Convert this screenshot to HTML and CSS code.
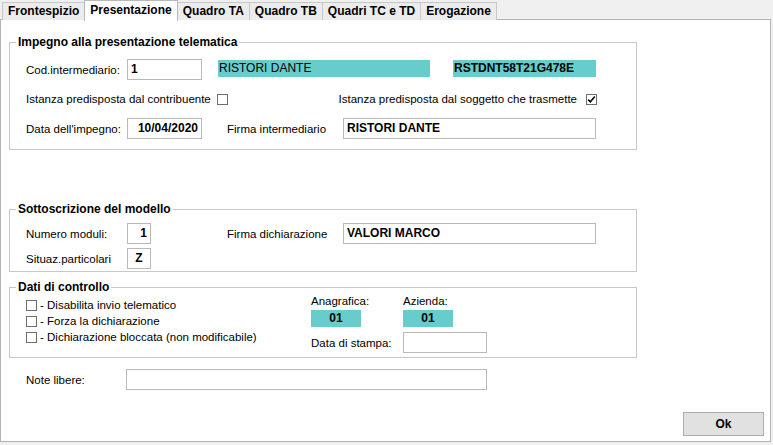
FILE: index.html
```html
<!DOCTYPE html>
<html lang="it">

<head>
    <meta charset="UTF-8">
    <meta name="viewport" content="width=device-width, initial-scale=1.0">
    <title>Presentazione</title>
    <link rel="stylesheet" href="styles.css">
</head>

<body>
    <div class="tabs">
        <div class="tab">Frontespizio</div>
        <div class="tab active">Presentazione</div>
        <div class="tab">Quadro TA</div>
        <div class="tab">Quadro TB</div>
        <div class="tab">Quadri TC e TD</div>
        <div class="tab">Erogazione</div>
    </div>

    <div class="panel">
        <fieldset class="group impegno">
            <legend>Impegno alla presentazione telematica</legend>

            <div class="row tall">
                <span class="lbl w101">Cod.intermediario:</span>
                <span class="field w75">1</span>
                <span class="cyan name">RISTORI DANTE</span>
                <span class="cyan cf">RSTDNT58T21G478E</span>
            </div>
            <div class="row short gap10">
                <span class="lbl w191">Istanza predisposta dal contribuente</span>
                <span class="check"></span>
                <span class="right-check">
                    <span class="lbl">Istanza predisposta dal soggetto che trasmette</span>
                    <span class="check">
                        <svg width="9" height="9" viewBox="0 0 9 9"><path d="M1.2 4.6 L3.4 6.8 L7.8 1.6" fill="none" stroke="#000" stroke-width="1.5"/></svg>
                    </span>
                </span>
            </div>
            <div class="row tall gap10">
                <span class="lbl w101">Data dell'impegno:</span>
                <span class="field w75 num">10/04/2020</span>
                <span class="lbl firma">Firma intermediario</span>
                <span class="field wide">RISTORI DANTE</span>
            </div>
        </fieldset>

        <fieldset class="group sottoscrizione">
            <legend>Sottoscrizione del modello</legend>

            <div class="row tall">
                <span class="lbl w101">Numero moduli:</span>
                <span class="field w24 num">1</span>
                <span class="lbl firma2">Firma dichiarazione</span>
                <span class="field wide">VALORI MARCO</span>
            </div>
            <div class="row tall gap4">
                <span class="lbl w101">Situaz.particolari</span>
                <span class="field w24 center">Z</span>
            </div>
        </fieldset>

        <fieldset class="group controllo">
            <legend>Dati di controllo</legend>

            <div class="ctrl-row">
                <div class="checks">
                    <div class="check-line"><span class="check"></span><span>- Disabilita invio telematico</span></div>
                    <div class="check-line"><span class="check"></span><span>- Forza la dichiarazione</span></div>
                    <div class="check-line"><span class="check"></span><span>- Dichiarazione bloccata (non modificabile)</span></div>
                </div>
                <div class="ctrl-grid">
                    <span class="top-lbl">Anagrafica:</span>
                    <span class="top-lbl">Azienda:</span>
                    <span class="cyan small">01</span>
                    <span class="cyan small">01</span>
                    <span class="lbl stampa-lbl">Data di stampa:</span>
                    <span class="field stampa"></span>
                </div>
            </div>
        </fieldset>

        <div class="row tall note">
            <span class="lbl w100">Note libere:</span>
            <span class="field note-field"></span>
        </div>

        <button class="ok" type="button">Ok</button>
    </div>
</body>

</html>
```

FILE: styles.css
```css
* {
    box-sizing: border-box;
}

body {
    margin: 0;
    background: #f0f0f0;
    font-family: "Liberation Sans", Arial, sans-serif;
    font-size: 11.5px;
    color: #000;
}

.tabs {
    display: flex;
    align-items: flex-end;
    height: 20px;
    padding-left: 2px;
}

.tab {
    height: 18px;
    line-height: 17px;
    padding: 0 5px;
    border: 1px solid #c8c8c8;
    border-bottom: none;
    margin-right: -1px;
    background: #ececec;
    font-weight: bold;
    font-size: 12px;
}

.tab.active {
    height: 21px;
    line-height: 18px;
    margin-bottom: -1px;
    background: #fff;
    border-color: #b9b9b9;
    position: relative;
    z-index: 1;
}

.panel {
    margin-top: -1px;
    width: 771px;
    height: 423px;
    border: 1px solid #b4b4b4;
    background: #fff;
    display: flex;
    flex-direction: column;
    padding-left: 8px;
}

.group {
    margin: 0;
    width: 628px;
    border: 1px solid #c8c8c8;
    padding: 10px 39px 10px 16px;
}

.group legend {
    padding: 0 2px;
    margin-left: -10px;
    font-weight: bold;
    font-size: 12px;
    line-height: 14px;
}

.impegno {
    margin-top: 15px;
}

.sottoscrizione {
    margin-top: 52px;
    padding-top: 7px;
    padding-bottom: 2px;
}

.controllo {
    margin-top: 8px;
    padding-top: 0;
    padding-bottom: 4px;
}

.row {
    display: flex;
    align-items: center;
}

.row.tall {
    height: 21px;
}

.row.short {
    height: 18px;
}

.gap10 {
    margin-top: 10px;
}

.gap4 {
    margin-top: 4px;
}

.lbl {
    white-space: nowrap;
}

.w100 {
    width: 100px;
}

.w101 {
    width: 101px;
}

.w191 {
    width: 191px;
}

.field {
    height: 21px;
    border: 1px solid #b9b9b9;
    background: #fff;
    font-weight: bold;
    font-size: 12px;
    line-height: 19px;
    padding: 0 3px;
    white-space: nowrap;
}

.field.num {
    text-align: right;
}

.field.center {
    text-align: center;
}

.w75 {
    width: 75px;
}

.w24 {
    width: 24px;
}

.wide {
    width: 253px;
}

.firma {
    width: 116px;
    margin-left: 25px;
}

.firma2 {
    width: 116px;
    margin-left: 76px;
}

.cyan {
    height: 17px;
    line-height: 17px;
    background: #66cccc;
    padding-left: 1px;
    font-size: 12px;
    white-space: nowrap;
}

.cyan.name {
    width: 212px;
    margin-left: 16px;
    margin-top: -3px;
}

.cyan.cf {
    width: 143px;
    margin-left: 23px;
    margin-top: -3px;
    font-weight: bold;
}

.check {
    display: inline-flex;
    align-items: center;
    justify-content: center;
    width: 11px;
    height: 11px;
    border: 1px solid #6e6e6e;
    background: #fff;
    flex-shrink: 0;
}

.right-check {
    margin-left: auto;
    display: flex;
    align-items: center;
    gap: 9px;
}

.ctrl-row {
    display: flex;
}

.checks {
    width: 285px;
    padding-top: 3px;
}

.check-line {
    display: flex;
    align-items: center;
    gap: 3px;
    height: 16px;
}

.ctrl-grid {
    display: grid;
    grid-template-columns: 92px 84px;
    align-items: center;
}

.top-lbl {
    line-height: 14px;
}

.cyan.small {
    width: 50px;
    margin-top: 2px;
    text-align: center;
    font-weight: bold;
    padding-left: 0;
}

.stampa-lbl {
    margin-top: 5px;
}

.field.stampa {
    width: 84px;
    margin-top: 5px;
}

.note {
    margin-left: 17px;
    margin-top: 11px;
}

.note-field {
    width: 361px;
}

.ok {
    margin-top: auto;
    align-self: flex-end;
    margin-right: 6px;
    margin-bottom: 5px;
    width: 81px;
    height: 24px;
    border: 1px solid #adadad;
    background: #e1e1e1;
    font-family: "Liberation Sans", Arial, sans-serif;
    font-weight: bold;
    font-size: 12px;
    color: #000;
    padding: 0;
}
```
